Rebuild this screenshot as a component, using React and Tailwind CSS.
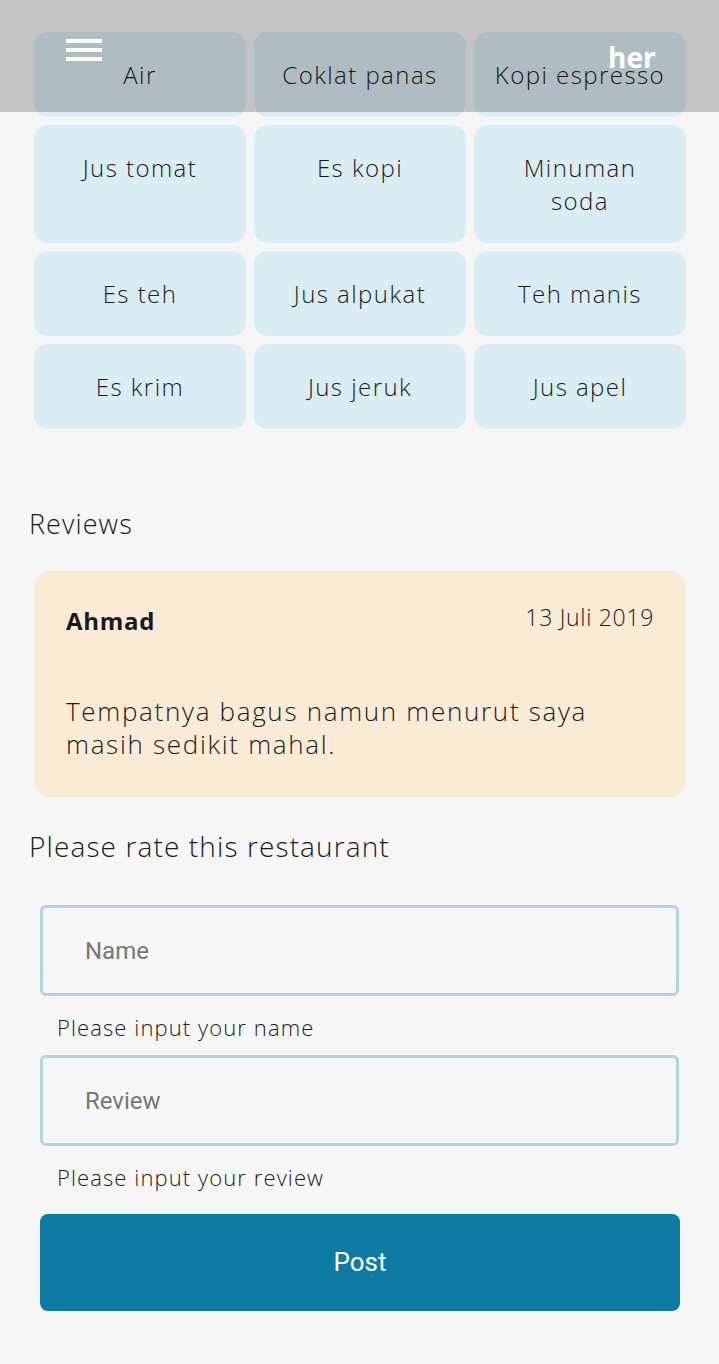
import React from "react";

const drinks = [
  "Air",
  "Coklat panas",
  "Kopi espresso",
  "Jus tomat",
  "Es kopi",
  "Minuman\nsoda",
  "Es teh",
  "Jus alpukat",
  "Teh manis",
  "Es krim",
  "Jus jeruk",
  "Jus apel",
];

const body = { fontFamily: "'Open Sans', Lato, sans-serif" };
const roboto = { fontFamily: "Roboto, 'Noto Sans', sans-serif" };

const Field = ({ placeholder, hint }) => (
  <div>
    <div className="mx-[40px] h-[91px] rounded-md border-[3px] border-[#afd5e1] flex items-center px-[42px]">
      <input
        placeholder={placeholder}
        className="w-full bg-transparent outline-none text-[24px] text-[#222] placeholder:text-[#777]"
        style={roboto}
      />
    </div>
    <p className="ml-[57px] mt-[17px] text-[22px] font-light text-[#1c1c1c] leading-[28px] tracking-[0.05em]">{hint}</p>
  </div>
);

export default function App() {
  return (
    <div className="relative min-h-[1364px] bg-[#f6f6f6] text-[#1a1a1a]" style={body}>
      <div className="px-[34px] pt-[32px] pr-[33px] grid grid-cols-3 gap-[8px]">
        {drinks.map((d) => (
          <div
            key={d}
            className="bg-[#dbedf4] rounded-[14px] flex items-start justify-center text-center whitespace-pre-line px-1 py-[26px] text-[24px] leading-[33px] font-light tracking-[0.06em]"
          >
            {d}
          </div>
        ))}
      </div>

      <h2 className="ml-[29px] mt-[78px] text-[27px] font-light leading-[34px] tracking-[0.04em]">Reviews</h2>

      <div className="mx-[34px] mr-[33px] mt-[30px] bg-[#faebd7] rounded-[16px] px-[32px] pt-[29px] pb-[36px]">
        <div className="flex justify-between items-start">
          <span className="text-[24px] font-bold leading-[40px] mt-[1px] tracking-[0.03em]">Ahmad</span>
          <span className="text-[23px] font-light leading-[34px] tracking-[0.03em]">13 Juli 2019</span>
        </div>
        <p className="mt-[54px] text-[26px] font-light leading-[33px] tracking-[0.065em]">
          Tempatnya bagus namun menurut saya
          <br />
          masih sedikit mahal.
        </p>
      </div>

      <h2 className="ml-[29px] mt-[31px] text-[28px] font-light leading-[36px] tracking-[0.04em]">
        Please rate this restaurant
      </h2>

      <div className="mt-[41px]">
        <Field placeholder="Name" hint="Please input your name" />
      </div>
      <div className="mt-[14px]">
        <Field placeholder="Review" hint="Please input your review" />
      </div>

      <button
        className="mx-[40px] mt-[23px] w-[640px] h-[97px] rounded-[8px] bg-[#0f7ba3] text-white text-[26px]"
        style={roboto}
      >
        Post
      </button>

      <div className="absolute top-0 left-0 right-0 h-[112px] bg-black/20">
        <div className="absolute left-[66px] top-[39px] w-[36px] flex flex-col gap-[5px]">
          <span className="h-[4px] bg-white" />
          <span className="h-[4px] bg-white" />
          <span className="h-[4px] bg-white" />
        </div>
        <span
          className="absolute left-[608px] top-[40px] text-white font-bold text-[28px] leading-[34px]"
          style={body}
        >
          her
        </span>
      </div>
    </div>
  );
}
